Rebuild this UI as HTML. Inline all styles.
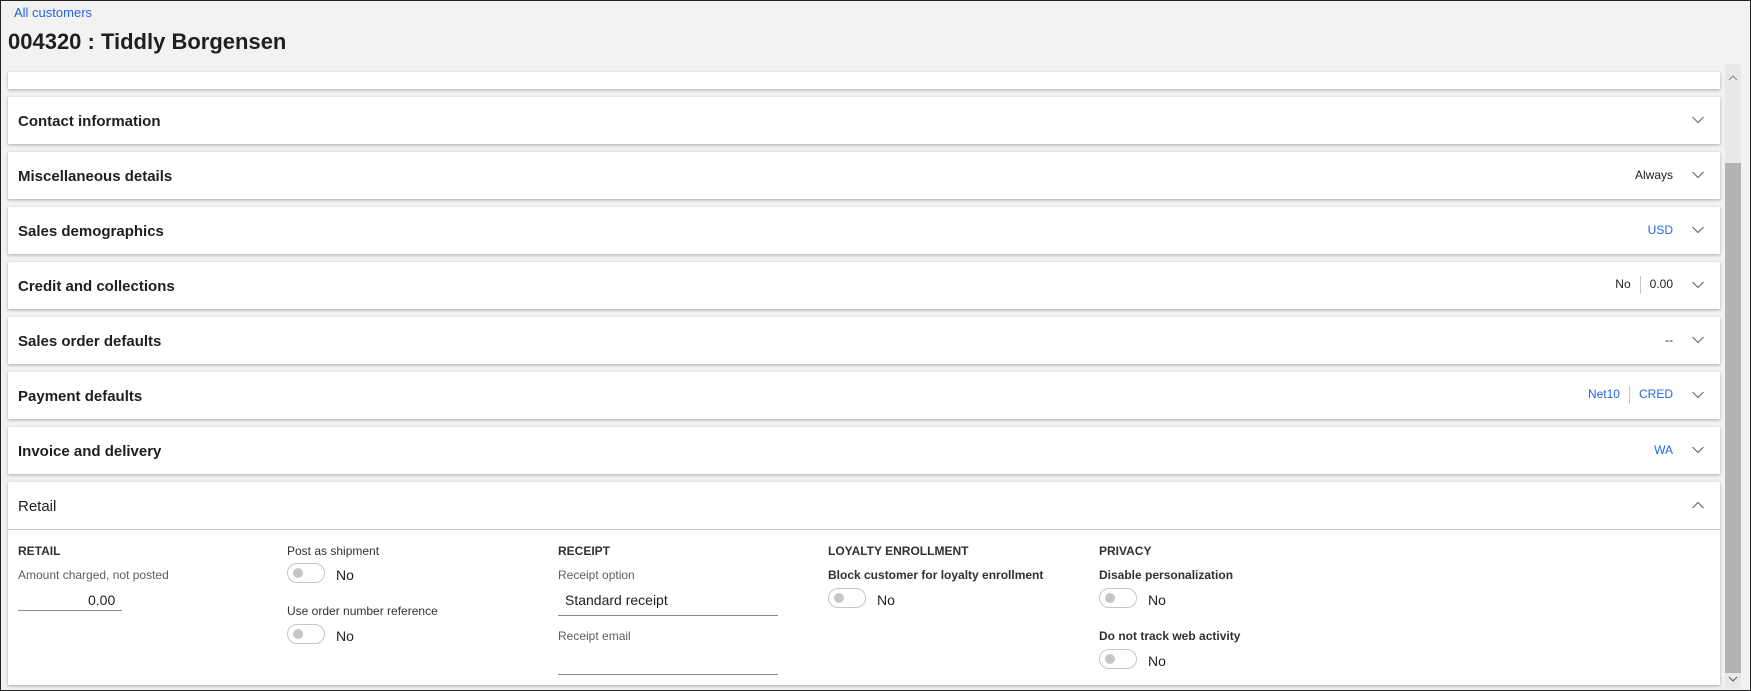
<!DOCTYPE html>
<html><head><style>
body{margin:0;width:1751px;height:691px;background:#f3f2f1;font-family:"Liberation Sans",sans-serif;position:relative;overflow:hidden;color:#201f1e}
.frame{position:absolute;left:0;top:0;width:1749px;height:689px;border:1px solid #222;pointer-events:none;z-index:9}
.bc{position:absolute;left:14px;top:5px;font-size:13px;color:#2266e3}
h1{position:absolute;left:8px;top:29px;margin:0;font-size:22px;font-weight:600;color:#201f1e}
.card{position:absolute;left:8px;width:1712px;background:#fff;box-shadow:0 1px 3px rgba(0,0,0,.3)}
.card .t{position:absolute;left:10px;top:16px;font-size:15px;font-weight:600;color:#201f1e}
.chev{position:absolute;left:1684px;top:19px}
.val{position:absolute;right:47px;top:16px;font-size:12px;color:#201f1e}
.blue{color:#2266e3}
.sep{display:inline-block;width:1px;height:18px;background:#c8c6c4;vertical-align:middle;margin:0 9px}
.lab{position:absolute;font-size:12px;font-weight:600;color:#323130}
.sub{position:absolute;font-size:12px;color:#605e5c}
.tog{position:absolute;width:36px;height:18px;border:1px solid #c8c6c4;border-radius:10px;background:#fff}
.tog:after{content:"";position:absolute;left:5px;top:4px;width:10px;height:10px;border-radius:50%;background:#c8c6c4}
.no{position:absolute;font-size:14px;color:#201f1e}
.ul{position:absolute;height:1px;background:#8a8886}
.sb{position:absolute;left:1725px;top:64px;width:16px;height:625px;background:#e8e8e8}
.thumb{position:absolute;left:1725px;top:163px;width:16px;height:510px;background:#b4b4b4}
</style></head><body>
<div class="frame"></div>
<div class="bc">All customers</div>
<h1>004320 : Tiddly Borgensen</h1>
<div class="card" style="top:72px;height:17px"></div>
<div class="card" style="top:97px;height:47px"><div class="t">Contact information</div><svg class="chev" width="12" height="8"><path d="M0.5 1l5.5 5.5 5.5-5.5" stroke="#605e5c" fill="none"/></svg></div>
<div class="card" style="top:152px;height:47px"><div class="t">Miscellaneous details</div><div class="val">Always</div><svg class="chev" width="12" height="8"><path d="M0.5 1l5.5 5.5 5.5-5.5" stroke="#605e5c" fill="none"/></svg></div>
<div class="card" style="top:207px;height:47px"><div class="t">Sales demographics</div><div class="val blue">USD</div><svg class="chev" width="12" height="8"><path d="M0.5 1l5.5 5.5 5.5-5.5" stroke="#605e5c" fill="none"/></svg></div>
<div class="card" style="top:262px;height:47px"><div class="t">Credit and collections</div><div class="val" style="top:14px">No<span class="sep"></span>0.00</div><svg class="chev" width="12" height="8"><path d="M0.5 1l5.5 5.5 5.5-5.5" stroke="#605e5c" fill="none"/></svg></div>
<div class="card" style="top:317px;height:47px"><div class="t">Sales order defaults</div><div class="val">--</div><svg class="chev" width="12" height="8"><path d="M0.5 1l5.5 5.5 5.5-5.5" stroke="#605e5c" fill="none"/></svg></div>
<div class="card" style="top:372px;height:47px"><div class="t">Payment defaults</div><div class="val blue" style="top:14px">Net10<span class="sep"></span>CRED</div><svg class="chev" width="12" height="8"><path d="M0.5 1l5.5 5.5 5.5-5.5" stroke="#605e5c" fill="none"/></svg></div>
<div class="card" style="top:427px;height:47px"><div class="t">Invoice and delivery</div><div class="val blue">WA</div><svg class="chev" width="12" height="8"><path d="M0.5 1l5.5 5.5 5.5-5.5" stroke="#605e5c" fill="none"/></svg></div>
<div class="card" style="top:482px;height:203px">
<div class="t" style="font-weight:normal">Retail</div><svg class="chev" width="12" height="8"><path d="M0.5 7l5.5-5.5 5.5 5.5" stroke="#605e5c" fill="none"/></svg>
<div style="position:absolute;left:0;top:47px;width:1712px;height:1px;background:#c8c6c4"></div>
<div class="lab" style="left:10px;top:62px">RETAIL</div>
<div class="sub" style="left:10px;top:86px">Amount charged, not posted</div>
<div class="no" style="left:80px;top:110px">0.00</div><div class="ul" style="left:10px;top:128px;width:104px"></div>
<div class="lab" style="left:279px;top:62px;font-weight:normal">Post as shipment</div>
<div class="tog" style="left:279px;top:81px"></div><div class="no" style="left:328px;top:85px">No</div>
<div class="lab" style="left:279px;top:122px;font-weight:normal">Use order number reference</div>
<div class="tog" style="left:279px;top:142px"></div><div class="no" style="left:328px;top:146px">No</div>
<div class="lab" style="left:550px;top:62px">RECEIPT</div>
<div class="sub" style="left:550px;top:86px">Receipt option</div>
<div class="no" style="left:557px;top:110px">Standard receipt</div><div class="ul" style="left:550px;top:133px;width:220px"></div>
<div class="sub" style="left:550px;top:147px">Receipt email</div>
<div class="ul" style="left:550px;top:192px;width:220px"></div>
<div class="lab" style="left:820px;top:62px">LOYALTY ENROLLMENT</div>
<div class="lab" style="left:820px;top:86px">Block customer for loyalty enrollment</div>
<div class="tog" style="left:820px;top:106px"></div><div class="no" style="left:869px;top:110px">No</div>
<div class="lab" style="left:1091px;top:62px">PRIVACY</div>
<div class="lab" style="left:1091px;top:86px">Disable personalization</div>
<div class="tog" style="left:1091px;top:106px"></div><div class="no" style="left:1140px;top:110px">No</div>
<div class="lab" style="left:1091px;top:147px">Do not track web activity</div>
<div class="tog" style="left:1091px;top:167px"></div><div class="no" style="left:1140px;top:171px">No</div>
</div>
<div class="sb"></div><div class="thumb"></div>
<svg style="position:absolute;left:1728px;top:75px" width="10" height="6"><path d="M1 5l4-4 4 4" stroke="#888" fill="none"/></svg>
<svg style="position:absolute;left:1728px;top:676px" width="10" height="6"><path d="M1 1l4 4 4-4" stroke="#555" fill="none"/></svg>
</body></html>
